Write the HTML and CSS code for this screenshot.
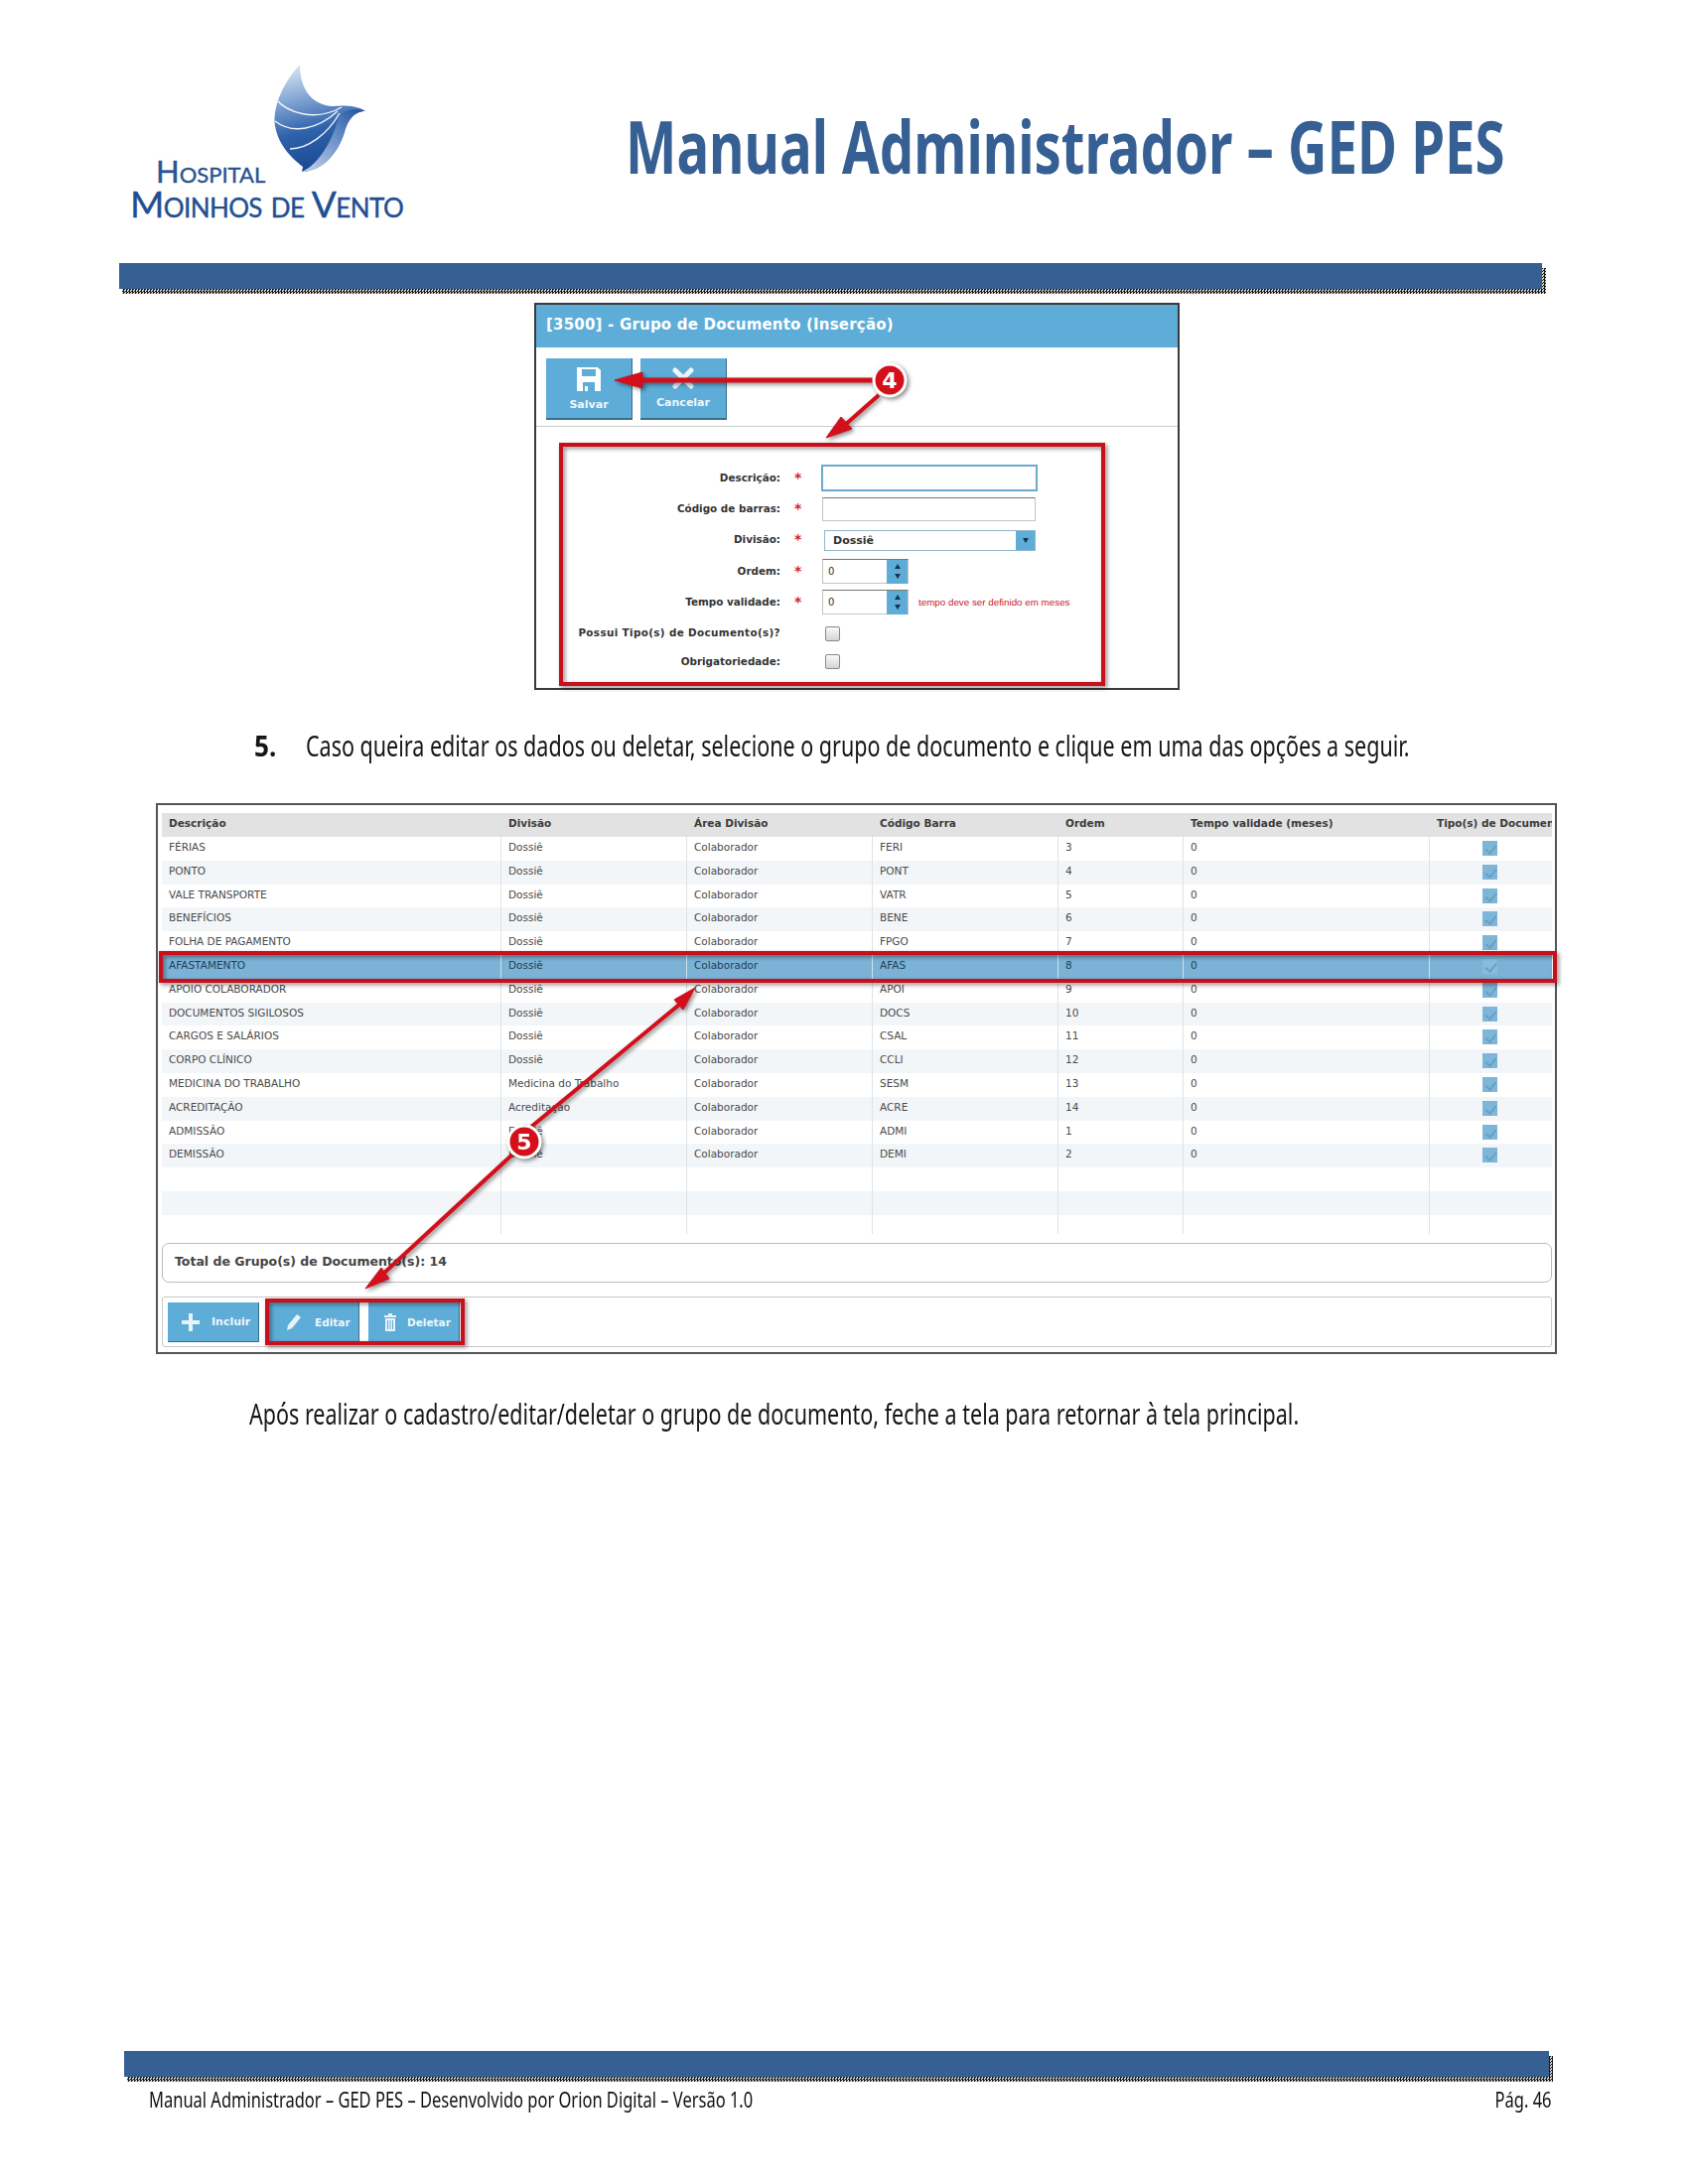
FILE: index.html
```html
<!DOCTYPE html>
<html lang="pt-BR">
<head>
  <meta charset="UTF-8" />
  <title>Manual Administrador - GED PES</title>
  <link rel="stylesheet" href="styles.css">
</head>

<body>
<div class="page">

  <!-- Cabecalho -->
  <header class="doc-header">
    <div class="logo">
      <svg class="logo-wing" width="96" height="110" viewBox="274 64 96 110">
        <defs>
          <linearGradient id="wingFill" x1="0.35" y1="0" x2="0.55" y2="1">
            <stop offset="0" stop-color="#d5e2f2" />
            <stop offset="0.3" stop-color="#7fa3d3" />
            <stop offset="0.6" stop-color="#2f62ab" />
            <stop offset="1" stop-color="#17468f" />
          </linearGradient>
          <linearGradient id="wingEdge" x1="0" y1="1" x2="1" y2="0">
            <stop offset="0" stop-color="#c6d6ec" />
            <stop offset="0.6" stop-color="#5f88c4" />
            <stop offset="1" stop-color="#1d4f97" />
          </linearGradient>
        </defs>
        <path d="M302 65C288 80 274 105 277 127C281 148 295 160 305 168L304 173C325 172 340 155 347 133C350 122 356 112 368 112C360 106 345 106 335 107C316 106 302 92 302 65Z" fill="url(#wingFill)" />
        <path d="M304 173C320 166 333 145 340 122C342 114 352 107 368 112C356 112 350 122 347 133C340 155 325 172 304 173Z" fill="url(#wingEdge)" />
        <path d="M278 100C288 112 316 124 344 108M277 122C295 136 320 130 340 112M292 150C310 150 330 135 342 114" fill="none" stroke="#eef4fb" stroke-width="1.4" />
      </svg>
      <div class="logo-line1">Hospital</div>
      <div class="logo-line2">Moinhos de Vento</div>
    </div>
    <h1 class="doc-title"><span>Manual Administrador – GED PES</span></h1>
  </header>
  <div class="doc-bar"></div>

  <!-- Tela de insercao -->
  <section class="form-panel">
    <div class="form-title">[3500] - Grupo de Documento (Inserção)</div>
    <div class="form-toolbar">
      <div class="tool-btn">
        <svg width="24" height="24" viewBox="0 0 24 24"><path fill="#fff" fill-rule="evenodd" d="M0 0h21l3 3v21H0zM5 2v7h14V2zM6 15v9h12v-9zM8 19h3v5H8z" /></svg>
        <span>Salvar</span>
      </div>
      <div class="tool-btn">
        <svg width="24" height="22" viewBox="0 0 24 22"><path stroke="#fff" stroke-width="5" stroke-linecap="round" opacity="0.9" d="M4 3l16 16M20 3L4 19" /></svg>
        <span>Cancelar</span>
      </div>
    </div>
    <div class="form-body">
      <div class="form-row">
        <label>Descrição:</label><i class="star">*</i>
        <input class="txt txt-focus" type="text" />
      </div>
      <div class="form-row">
        <label>Código de barras:</label><i class="star">*</i>
        <input class="txt txt-plain" type="text" />
      </div>
      <div class="form-row">
        <label>Divisão:</label><i class="star">*</i>
        <div class="combo"><span>Dossiê</span><b class="combo-btn"><em class="tri-down"></em></b></div>
      </div>
      <div class="form-row">
        <label>Ordem:</label><i class="star">*</i>
        <div class="spinner"><span>0</span><b class="spin-btn"><em class="tri-up"></em><em class="tri-down"></em></b></div>
      </div>
      <div class="form-row">
        <label>Tempo validade:</label><i class="star">*</i>
        <div class="spinner"><span>0</span><b class="spin-btn"><em class="tri-up"></em><em class="tri-down"></em></b></div>
        <small class="hint">tempo deve ser definido em meses</small>
      </div>
      <div class="form-row">
        <label class="label-wide">Possui Tipo(s) de Documento(s)?</label><i></i>
        <div class="chk-empty"></div>
      </div>
      <div class="form-row">
        <label>Obrigatoriedade:</label><i></i>
        <div class="chk-empty"></div>
      </div>
    </div>
  </section>

  <p class="step"><strong>5.</strong><span>Caso queira editar os dados ou deletar, selecione o grupo de documento e clique em uma das opções a seguir.</span></p>

  <!-- Lista de grupos -->
  <section class="list-panel">
    <div class="grid">
      <div class="grid-row grid-head"><div>Descrição</div><div>Divisão</div><div>Área Divisão</div><div>Código Barra</div><div>Ordem</div><div>Tempo validade (meses)</div><div>Tipo(s) de Documento(s)</div></div>
      <div class="grid-row"><div>FÉRIAS</div><div>Dossiê</div><div>Colaborador</div><div>FERI</div><div>3</div><div>0</div><div><u class="chk"></u></div></div>
      <div class="grid-row"><div>PONTO</div><div>Dossiê</div><div>Colaborador</div><div>PONT</div><div>4</div><div>0</div><div><u class="chk"></u></div></div>
      <div class="grid-row"><div>VALE TRANSPORTE</div><div>Dossiê</div><div>Colaborador</div><div>VATR</div><div>5</div><div>0</div><div><u class="chk"></u></div></div>
      <div class="grid-row"><div>BENEFÍCIOS</div><div>Dossiê</div><div>Colaborador</div><div>BENE</div><div>6</div><div>0</div><div><u class="chk"></u></div></div>
      <div class="grid-row"><div>FOLHA DE PAGAMENTO</div><div>Dossiê</div><div>Colaborador</div><div>FPGO</div><div>7</div><div>0</div><div><u class="chk"></u></div></div>
      <div class="grid-row selected"><div>AFASTAMENTO</div><div>Dossiê</div><div>Colaborador</div><div>AFAS</div><div>8</div><div>0</div><div><u class="chk"></u></div></div>
      <div class="grid-row"><div>APOIO COLABORADOR</div><div>Dossiê</div><div>Colaborador</div><div>APOI</div><div>9</div><div>0</div><div><u class="chk"></u></div></div>
      <div class="grid-row"><div>DOCUMENTOS SIGILOSOS</div><div>Dossiê</div><div>Colaborador</div><div>DOCS</div><div>10</div><div>0</div><div><u class="chk"></u></div></div>
      <div class="grid-row"><div>CARGOS E SALÁRIOS</div><div>Dossiê</div><div>Colaborador</div><div>CSAL</div><div>11</div><div>0</div><div><u class="chk"></u></div></div>
      <div class="grid-row"><div>CORPO CLÍNICO</div><div>Dossiê</div><div>Colaborador</div><div>CCLI</div><div>12</div><div>0</div><div><u class="chk"></u></div></div>
      <div class="grid-row"><div>MEDICINA DO TRABALHO</div><div>Medicina do Trabalho</div><div>Colaborador</div><div>SESM</div><div>13</div><div>0</div><div><u class="chk"></u></div></div>
      <div class="grid-row"><div>ACREDITAÇÃO</div><div>Acreditação</div><div>Colaborador</div><div>ACRE</div><div>14</div><div>0</div><div><u class="chk"></u></div></div>
      <div class="grid-row"><div>ADMISSÃO</div><div>Dossiê</div><div>Colaborador</div><div>ADMI</div><div>1</div><div>0</div><div><u class="chk"></u></div></div>
      <div class="grid-row"><div>DEMISSÃO</div><div>Dossiê</div><div>Colaborador</div><div>DEMI</div><div>2</div><div>0</div><div><u class="chk"></u></div></div>
      <div class="grid-row"><div></div><div></div><div></div><div></div><div></div><div></div><div></div></div>
      <div class="grid-row"><div></div><div></div><div></div><div></div><div></div><div></div><div></div></div>
      <div class="grid-row grid-last"><div></div><div></div><div></div><div></div><div></div><div></div><div></div></div>
    </div>

    <div class="total-box">Total de Grupo(s) de Documento(s): 14</div>

    <div class="action-bar">
      <div class="act-btn act-add">
        <svg width="18" height="18" viewBox="0 0 18 18"><path fill="#e8f3f9" d="M7 0h4v7h7v4h-7v7H7v-7H0V7h7z" /></svg>
        <span>Incluir</span>
      </div>
      <div class="act-btn act-edit">
        <svg width="15" height="16" viewBox="0 0 15 16"><path fill="#e8f3f9" d="M11 0l4 3-9 11-5 2 1-5zM1 16z" /></svg>
        <span>Editar</span>
      </div>
      <div class="act-btn act-del">
        <svg width="12" height="18" viewBox="0 0 12 18"><path fill="#e8f3f9" fill-rule="evenodd" d="M4 0h4v2h4v2H0V2h4zM1 5h10v13H1zM3 7v9h1V7zM5.500 7v9h1V7zM8 7v9h1V7z" /></svg>
        <span>Deletar</span>
      </div>
    </div>
  </section>

  <p class="note"><span>Após realizar o cadastro/editar/deletar o grupo de documento, feche a tela para retornar à tela principal.</span></p>

  <!-- Rodape -->
  <footer class="doc-footer">
    <div class="doc-bar foot-bar"></div>
    <div class="foot-text">
      <span class="foot-left">Manual Administrador – GED PES – Desenvolvido por Orion Digital – Versão 1.0</span>
      <span class="foot-right">Pág. 46</span>
    </div>
  </footer>

  <!-- Anotacoes em vermelho por cima da captura -->
  <svg class="marks" width="1700" height="2200" viewBox="0 0 1700 2200">
    <g class="mark-boxes" fill="none" stroke="#c90f1b" stroke-width="4">
      <rect x="565" y="448" width="546" height="241" />
      <rect x="162" y="960" width="1404" height="28" />
      <rect x="269" y="1310" width="197" height="43" />
    </g>
    <g class="mark-arrows" fill="#d20f1a" stroke="#d20f1a" stroke-linejoin="round">
      <path stroke-width="5" d="M880 383H644" />
      <path stroke-width="1" d="M619 383L647 375V391Z" />
      <path stroke-width="4" d="M885 398L851 428" />
      <path stroke-width="1" d="M832 441L847 420L858 432Z" />
      <path stroke-width="4" d="M535 1135L684 1012" />
      <path stroke-width="1" d="M700 995L679 1007L688 1017Z" />
      <path stroke-width="4" d="M516 1163L386 1283" />
      <path stroke-width="1" d="M368 1298L384 1277L392 1288Z" />
    </g>
    <g class="mark-badges">
      <circle cx="896" cy="383" r="16" fill="#d4101b" stroke="#fff" stroke-width="3" />
      <text x="896" y="391">4</text>
      <circle cx="528" cy="1150" r="16" fill="#d4101b" stroke="#fff" stroke-width="3" />
      <text x="528" y="1158">5</text>
    </g>
  </svg>
</div>
</body>
</html>
```
FILE: styles.css
```css
:root {
  --blue-doc: #365f93;
  --blue-app: #5dadd8;
  --blue-dark: #3a6f8c;
  --line: #dfe3e6;
  --text: #4a4a4a;
}

* {
  box-sizing: border-box;
}

body {
  margin: 0;
  background: #fff;
  font-family: "DejaVu Sans", sans-serif;
}

.page {
  position: relative;
  width: 1700px;
  height: 2200px;
  overflow: hidden;
  display: flex;
  flex-direction: column;
}

/* Cabecalho */
.doc-header {
  height: 265px;
  display: flex;
}

.logo {
  position: relative;
  flex: none;
  width: 630px;
  padding: 64px 0 0 131px;
  font-family: "Lato", sans-serif;
  font-variant: small-caps;
  color: #28548f;
  white-space: nowrap;
  -webkit-text-stroke: 0.4px currentColor;
}

.logo-wing {
  display: block;
  margin-left: 143px;
  margin-bottom: -17px;
}

.logo-line1 {
  margin-left: 26px;
  font-size: 31px;
  line-height: 31px;
}

.logo-line2 {
  font-size: 37px;
  line-height: 34px;
  letter-spacing: -0.6px;
  color: #1f4f92;
}

.doc-title {
  margin: 103px 0 0;
  font-family: "Noto Sans", sans-serif;
  font-size: 73px;
  line-height: 88px;
  font-weight: 700;
  color: var(--blue-doc);
  white-space: nowrap;
}

.doc-title span {
  display: inline-block;
  transform: scaleX(0.747);
  transform-origin: left center;
}

.doc-bar {
  position: relative;
  margin-left: 120px;
  width: 1433px;
  height: 26px;
  background: var(--blue-doc);
  flex: none;
}

.doc-bar::after {
  content: "";
  position: absolute;
  left: 3px;
  top: 5px;
  right: -4px;
  bottom: -5px;
  z-index: -1;
  background: repeating-conic-gradient(#1c1c1c 0 25%, #d8d0c4 0 50%) 0 0 / 3px 3px;
}

/* Tela de insercao */
.form-panel {
  margin: 14px 0 0 538px;
  width: 650px;
  height: 390px;
  border: 2px solid #3a3a3a;
  flex: none;
}

.form-title {
  height: 43px;
  padding: 0 0 0 10px;
  background: var(--blue-app);
  color: #fff;
  font-size: 15px;
  letter-spacing: 0.2px;
  line-height: 41px;
  font-weight: 700;
}

.form-toolbar {
  display: flex;
  gap: 8px;
  padding: 11px 0 6px 10px;
  border-bottom: 1px solid #ccc;
}

.tool-btn {
  width: 87px;
  height: 62px;
  padding-top: 9px;
  display: flex;
  flex-direction: column;
  align-items: center;
  gap: 7px;
  background: var(--blue-app);
  border-right: 1px solid var(--blue-dark);
  border-bottom: 2px solid var(--blue-dark);
  color: #eef6fb;
  font-size: 11px;
  font-weight: 700;
}

.form-body {
  padding-top: 36px;
}

.form-row {
  height: 31.3px;
  display: flex;
  align-items: center;
  font-size: 10.4px;
  color: #333;
}

.form-row:last-child {
  height: 26px;
}

.form-row label {
  width: 246px;
  padding-bottom: 2px;
  text-align: right;
  font-weight: 700;
  white-space: nowrap;
}

.form-row .label-wide {
  letter-spacing: 0.35px;
}

.form-row i {
  width: 41px;
  padding: 0 0 2px 14px;
  font-style: normal;
  font-weight: 700;
  font-size: 14px;
  color: #d9202a;
}

.txt {
  display: block;
  padding: 0;
  background: #fff;
}

.txt-focus {
  width: 218px;
  height: 27px;
  border: 2px solid #6aa9d0;
}

.txt-plain {
  width: 215px;
  height: 24px;
  margin-left: 1px;
  border: 1px solid #c4c4c4;
  border-top-color: #777;
}

.combo {
  width: 213px;
  height: 21px;
  margin-left: 3px;
  padding-left: 8px;
  display: flex;
  justify-content: space-between;
  align-items: center;
  border: 1px solid #8fb6c9;
  font-weight: 700;
  font-size: 11px;
}

.combo-btn {
  width: 19px;
  height: 19px;
  display: flex;
  justify-content: center;
  align-items: center;
  background: var(--blue-app);
}

.spinner {
  width: 87px;
  height: 25px;
  margin-left: 1px;
  padding-left: 5px;
  display: flex;
  justify-content: space-between;
  align-items: center;
  border: 1px solid #c4c4c4;
  border-top-color: #777;
  font-size: 10px;
}

.spin-btn {
  width: 21px;
  height: 24px;
  display: flex;
  flex-direction: column;
  justify-content: center;
  align-items: center;
  gap: 5px;
  background: var(--blue-app);
}

.tri-up,
.tri-down {
  width: 0;
  height: 0;
  border-left: 3.5px solid transparent;
  border-right: 3.5px solid transparent;
}

.tri-up {
  border-bottom: 5px solid #12344c;
}

.tri-down {
  border-top: 5px solid #12344c;
}

.hint {
  margin-left: 10px;
  font-size: 9.8px;
  color: #c8202c;
  white-space: nowrap;
  font-family: "Liberation Sans", sans-serif;
}

.chk-empty {
  width: 15px;
  height: 15px;
  margin-left: 4px;
  border: 1px solid #888;
  border-radius: 2px;
  background: linear-gradient(#fafafa, #d4d4d4);
}

/* Texto */
.step,
.note {
  margin: 0;
  font-family: "Noto Sans", sans-serif;
  font-size: 29px;
  line-height: 40px;
  color: #151515;
  white-space: nowrap;
  flex: none;
}

.step {
  margin: 36px 0 0 256px;
  display: flex;
}

.step strong {
  flex: none;
  width: 52px;
  transform: scaleX(0.9);
  transform-origin: left center;
}

.step span,
.note span {
  display: inline-block;
  transform: scaleX(0.742);
  transform-origin: left center;
}

.note {
  margin: 40px 0 0 251px;
}

/* Lista de grupos */
.list-panel {
  margin: 38px 0 0 157px;
  width: 1411px;
  height: 555px;
  padding: 8px 3px 0 4px;
  border: 2px solid #555;
  flex: none;
}

.grid {
  height: 424px;
  overflow: hidden;
  font-size: 10.5px;
  color: var(--text);
}

.grid-row {
  height: 23.8px;
  display: grid;
  grid-template-columns: 342px 187px 187px 187px 126px 248px 123px;
  line-height: 20px;
}

.grid-row:nth-child(odd) {
  background: #f3f6f9;
}

.grid-row > div {
  padding-left: 7px;
  border-right: 1px solid var(--line);
  overflow: hidden;
  white-space: nowrap;
}

.grid-row > div:last-child {
  border-right: 0;
}

.grid-head,
.grid-head:nth-child(odd) {
  height: 24px;
  background: #e2e2e2;
  font-weight: 700;
  color: #3c3c3c;
}

.grid-row:nth-child(even) {
  background: #fff;
}

.grid-row.selected {
  background: #7bb2d6;
  color: #1f3f55;
}

.grid-row.selected > div {
  border-right-color: #cfe2ef;
}

.grid-row > div:last-child {
  text-align: center;
}

.grid-head > div:last-child {
  text-align: left;
}

.chk {
  display: inline-block;
  position: relative;
  width: 15px;
  height: 15px;
  margin-top: 4px;
  margin-left: -9px;
  background: #7db6d8;
  vertical-align: top;
}

.chk::after {
  content: "";
  position: absolute;
  left: 5px;
  top: 2px;
  width: 5px;
  height: 9px;
  border-right: 2px solid #6a9fc0;
  border-bottom: 2px solid #6a9fc0;
  transform: rotate(40deg);
}

.selected .chk {
  background: #86bcdc;
}

.total-box {
  height: 40px;
  margin: 9px 0 0;
  padding-left: 12px;
  border: 1px solid #bcbcbc;
  border-radius: 7px;
  font-size: 12.5px;
  font-weight: 700;
  line-height: 36px;
  color: #444;
}

.action-bar {
  height: 51px;
  margin-top: 14px;
  padding: 5px 0 0 5px;
  display: flex;
  gap: 9px;
  border: 1px solid #c8c8c8;
  border-radius: 3px;
}

.act-btn {
  width: 92px;
  height: 40px;
  display: flex;
  align-items: center;
  background: var(--blue-app);
  border-right: 1px solid var(--blue-dark);
  border-bottom: 1px solid var(--blue-dark);
  color: #eef6fb;
  font-size: 11px;
  font-weight: 700;
}

.act-add {
  padding-left: 14px;
  gap: 12px;
}

.act-edit {
  padding-left: 18px;
  gap: 14px;
  font-size: 10.5px;
}

.act-del {
  padding-left: 16px;
  gap: 11px;
  font-size: 10.5px;
}

/* Rodape */
.doc-footer {
  margin-top: auto;
  padding-bottom: 70px;
}

.foot-bar {
  margin-left: 125px;
  width: 1435px;
}

.foot-text {
  margin: 8px 137px 0 150px;
  display: flex;
  justify-content: space-between;
  font-family: "Noto Sans", sans-serif;
  font-size: 21px;
  line-height: 30px;
  color: #111;
  white-space: nowrap;
}

.foot-left {
  display: inline-block;
  transform: scaleX(0.785);
  transform-origin: left center;
}

.foot-right {
  display: inline-block;
  transform: scaleX(0.785);
  transform-origin: right center;
}

/* Anotacoes */
.marks {
  position: absolute;
  left: 0;
  top: 0;
  pointer-events: none;
}

.mark-boxes,
.mark-arrows,
.mark-badges {
  filter: drop-shadow(2px 2px 2px rgba(0, 0, 0, 0.45));
}

.mark-badges text {
  font-family: "DejaVu Sans", sans-serif;
  font-size: 22px;
  font-weight: 700;
  fill: #fff;
  text-anchor: middle;
}
```
